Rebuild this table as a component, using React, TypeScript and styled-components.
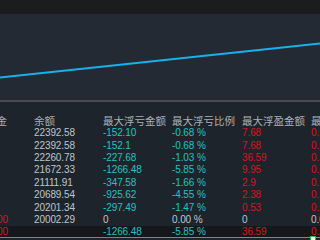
import styled, { createGlobalStyle } from "styled-components";

const GlobalStyle = createGlobalStyle`
  html, body {
    margin: 0;
    padding: 0;
    background: #1e242b;
  }
  body {
    width: 320px;
    height: 240px;
    overflow: hidden;
    font-family: "Liberation Sans", "Noto Sans CJK SC", sans-serif;
  }
`;

type Tone = "plain" | "cyan" | "red";

interface Row {
  deposit: string;
  balance: string;
  maxLoss: string;
  maxLossPct: string;
  maxGain: string;
  maxGainPct: string;
  plain?: boolean;
}

const rows: Row[] = [
  { deposit: "", balance: "22392.58", maxLoss: "-152.10", maxLossPct: "-0.68 %", maxGain: "7.68", maxGainPct: "0.03 %" },
  { deposit: "", balance: "22392.58", maxLoss: "-152.1", maxLossPct: "-0.68 %", maxGain: "7.68", maxGainPct: "0.03 %" },
  { deposit: "", balance: "22260.78", maxLoss: "-227.68", maxLossPct: "-1.03 %", maxGain: "36.59", maxGainPct: "0.16 %" },
  { deposit: "", balance: "21672.33", maxLoss: "-1266.48", maxLossPct: "-5.85 %", maxGain: "9.95", maxGainPct: "0.05 %" },
  { deposit: "", balance: "21111.91", maxLoss: "-347.58", maxLossPct: "-1.66 %", maxGain: "2.9", maxGainPct: "0.01 %" },
  { deposit: "", balance: "20689.54", maxLoss: "-925.62", maxLossPct: "-4.55 %", maxGain: "2.38", maxGainPct: "0.01 %" },
  { deposit: "", balance: "20201.34", maxLoss: "-297.49", maxLossPct: "-1.47 %", maxGain: "0.53", maxGainPct: "0.00 %" },
  { deposit: "20000.00", balance: "20002.29", maxLoss: "0", maxLossPct: "0.00 %", maxGain: "0", maxGainPct: "0.00 %", plain: true },
];

const headers = ["累计入金", "余额", "最大浮亏金额", "最大浮亏比例", "最大浮盈金额", "最大浮盈比例"];

export default function App() {
  return (
    <>
      <GlobalStyle />
      <Screen>
        <TopBar />
        <Chart>
          <svg width="320" height="86" viewBox="0 0 320 86">
            <line x1="0" y1="63.5" x2="320" y2="29.5" stroke="#15b2ec" strokeWidth="2" />
          </svg>
        </Chart>
        <Divider />
        <TableWrap>
          <Table>
            <HeaderRow>
              {headers.map((h) => (
                <HeadCell key={h}>{h}</HeadCell>
              ))}
            </HeaderRow>
            {rows.map((r, i) => (
              <DataRow key={i}>
                <DepositCell tone="red">{r.deposit}</DepositCell>
                <Cell tone="plain">{r.balance}</Cell>
                <Cell tone={r.plain ? "plain" : "cyan"}>{r.maxLoss}</Cell>
                <Cell tone={r.plain ? "plain" : "cyan"}>{r.maxLossPct}</Cell>
                <Cell tone={r.plain ? "plain" : "red"}>{r.maxGain}</Cell>
                <Cell tone={r.plain ? "plain" : "red"}>{r.maxGainPct}</Cell>
              </DataRow>
            ))}
            <SumRow>
              <DepositCell tone="red">20000.00</DepositCell>
              <Cell tone="plain"></Cell>
              <Cell tone="cyan">-1266.48</Cell>
              <Cell tone="cyan">-5.85 %</Cell>
              <Cell tone="red">36.59</Cell>
              <Cell tone="red">0.16 %</Cell>
            </SumRow>
          </Table>
        </TableWrap>
        <Marker />
      </Screen>
    </>
  );
}

const Screen = styled.div`
  position: relative;
  display: flex;
  flex-direction: column;
  width: 320px;
  height: 240px;
  overflow: hidden;
`;

const TopBar = styled.div`
  height: 14px;
  background: #1b1c1e;
`;

const Chart = styled.div`
  height: 86px;
  background: #232a33;

  svg {
    display: block;
  }
`;

const Divider = styled.div`
  height: 2px;
  background: #474b51;
`;

const TableWrap = styled.div`
  flex: 1;
  overflow: hidden;
  background: #1e242b;
`;

const Table = styled.div`
  margin-left: -35px;
  width: 420px;
`;

const gridCols = "69px 69px 69px 70px 69px 74px";

const HeaderRow = styled.div`
  display: grid;
  grid-template-columns: ${gridCols};
  height: 25px;
  padding-top: 13px;
  box-sizing: border-box;
`;

const HeadCell = styled.div`
  font-family: "Noto Sans CJK SC", sans-serif;
  font-size: 10.5px;
  line-height: 12px;
  color: #a9b0b8;
  white-space: nowrap;
`;

const DataRow = styled.div`
  display: grid;
  grid-template-columns: ${gridCols};
  height: 12.4px;
  align-items: center;
`;

const SumRow = styled(DataRow)`
  height: 11px;
  background: #15181b;
  border-bottom: 1px solid #7d838b;
  box-sizing: content-box;
`;

const toneColor: Record<Tone, string> = {
  plain: "#bec4cc",
  cyan: "#22c2c2",
  red: "#d8141e",
};

const Cell = styled.div<{ tone: Tone }>`
  font-size: 10px;
  line-height: 12px;
  letter-spacing: -0.1px;
  white-space: nowrap;
  color: ${(p) => toneColor[p.tone]};
`;

const DepositCell = styled(Cell)`
  padding-left: 2px;
`;

const Marker = styled.div`
  position: absolute;
  left: 310px;
  top: 236px;
  width: 4px;
  height: 4px;
  background: #ffffff;
  border: 1px solid #2fbf4f;
`;
